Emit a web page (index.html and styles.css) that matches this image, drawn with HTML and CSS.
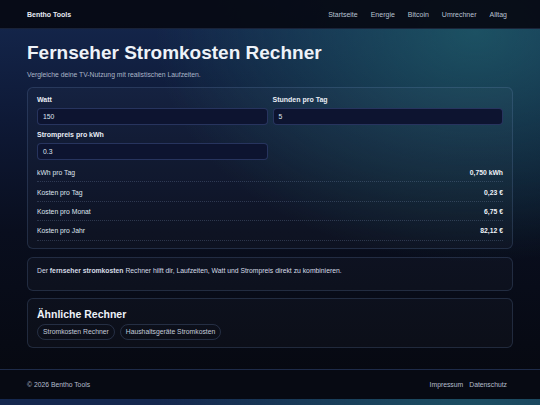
FILE: index.html
```html
<!DOCTYPE html>
<html lang="de">
<head>
<meta charset="utf-8">
<title>Fernseher Stromkosten Rechner</title>
<link rel="stylesheet" href="styles.css">
</head>
<body>
<header class="site-header">
  <div class="brand">Bentho Tools</div>
  <nav class="nav">
    <a href="#">Startseite</a>
    <a href="#">Energie</a>
    <a href="#">Bitcoin</a>
    <a href="#">Umrechner</a>
    <a href="#">Alltag</a>
  </nav>
</header>
<main class="main">
  <h1 class="title">Fernseher Stromkosten Rechner</h1>
  <p class="subtitle">Vergleiche deine TV-Nutzung mit realistischen Laufzeiten.</p>

  <section class="card calc">
    <div class="fields">
      <label class="field">
        <span class="label">Watt</span>
        <span class="input">150</span>
      </label>
      <label class="field">
        <span class="label">Stunden pro Tag</span>
        <span class="input">5</span>
      </label>
      <label class="field">
        <span class="label">Strompreis pro kWh</span>
        <span class="input">0.3</span>
      </label>
    </div>
    <div class="results">
      <div class="row"><span>kWh pro Tag</span><b>0,750 kWh</b></div>
      <div class="row"><span>Kosten pro Tag</span><b>0,23 €</b></div>
      <div class="row"><span>Kosten pro Monat</span><b>6,75 €</b></div>
      <div class="row"><span>Kosten pro Jahr</span><b>82,12 €</b></div>
    </div>
  </section>

  <section class="card info">
    <p>Der <b>fernseher stromkosten</b> Rechner hilft dir, Laufzeiten, Watt und Strompreis direkt zu kombinieren.</p>
  </section>

  <section class="card related">
    <h2>Ähnliche Rechner</h2>
    <div class="pills">
      <a class="pill" href="#">Stromkosten Rechner</a>
      <a class="pill" href="#">Haushaltsgeräte Stromkosten</a>
    </div>
  </section>
</main>
<footer class="site-footer">
  <span>© 2026 Bentho Tools</span>
  <nav class="foot-nav">
    <a href="#">Impressum</a>
    <a href="#">Datenschutz</a>
  </nav>
</footer>
</body>
</html>
```

FILE: styles.css
```css
html {
  background:
    radial-gradient(ellipse 320px 230px at 88% 8%, rgba(32, 100, 110, 0.7), rgba(32, 100, 110, 0) 100%),
    linear-gradient(180deg, #15284f 0%, #0e1936 30%, #090e1e 58%, #06080f 100%);
}

body {
  margin: 0;
  font-family: "Liberation Sans", Arial, sans-serif;
  color: #e6ebf3;
  font-size: 6.8px;
}

a {
  color: inherit;
  text-decoration: none;
}

.site-header {
  height: 28px;
  background: rgba(6, 9, 18, 0.92);
  border-bottom: 1px solid rgba(60, 80, 120, 0.35);
  display: flex;
  align-items: center;
  justify-content: space-between;
  padding: 0 33px 0 27px;
}

.brand {
  font-weight: bold;
  font-size: 7px;
  color: #e8ecf4;
}

.nav {
  display: flex;
  gap: 13px;
  font-size: 7px;
}

.nav a {
  color: #b9c2d2;
}

.main {
  width: 486px;
  margin: 0 auto;
  padding: 12px 0 21px;
}

.title {
  margin: 0;
  font-size: 19px;
  line-height: 24px;
  font-weight: bold;
  color: #eef2f8;
}

.subtitle {
  margin: 5px 0 0;
  line-height: 10px;
  color: #aab5c8;
}

.card {
  background: rgba(255, 255, 255, 0.025);
  border: 1px solid rgba(110, 140, 190, 0.22);
  border-radius: 6px;
  box-sizing: border-box;
}

.calc {
  margin-top: 7px;
  padding: 7px 9px 7px;
}

.fields {
  display: grid;
  grid-template-columns: 1fr 1fr;
  column-gap: 5px;
  row-gap: 5px;
}

.field {
  display: flex;
  flex-direction: column;
}

.label {
  font-weight: bold;
  font-size: 7px;
  line-height: 10px;
  color: #e8ecf4;
  margin-bottom: 3px;
}

.input {
  height: 17px;
  box-sizing: border-box;
  border: 1px solid rgba(70, 90, 150, 0.45);
  border-radius: 4px;
  background: #0d1430;
  padding: 0 5px;
  display: flex;
  align-items: center;
  color: #dfe5ef;
}

.results {
  margin-top: 3px;
}

.row {
  display: flex;
  justify-content: space-between;
  align-items: center;
  box-sizing: border-box;
  height: 19.4px;
  padding-top: 1px;
  border-bottom: 1px dotted rgba(140, 160, 200, 0.25);
  color: #dfe5ef;
}

.row b {
  color: #eef2f8;
}

.info {
  margin-top: 8px;
  height: 34px;
  padding: 8px 9px 0;
}

.info p {
  margin: 0;
  line-height: 10px;
  color: #d5dbe6;
}

.related {
  margin-top: 7px;
  height: 50px;
  padding: 8px 9px 0;
}

.related h2 {
  margin: 0;
  font-size: 10.5px;
  line-height: 14px;
  color: #eef2f8;
}

.pills {
  display: flex;
  gap: 5px;
  margin-top: 3px;
}

.pill {
  height: 16px;
  box-sizing: border-box;
  display: flex;
  align-items: center;
  padding: 0 5px;
  border: 1px solid rgba(110, 140, 190, 0.25);
  border-radius: 8px;
  color: #c3cbda;
}

.site-footer {
  height: 29px;
  background: #070a13;
  border-top: 1px solid rgba(60, 85, 140, 0.45);
  display: flex;
  align-items: center;
  justify-content: space-between;
  padding: 0 33px 0 27px;
  color: #b4bdcd;
}

.foot-nav {
  display: flex;
  gap: 6px;
}

.foot-nav a {
  color: #b4bdcd;
}
```
